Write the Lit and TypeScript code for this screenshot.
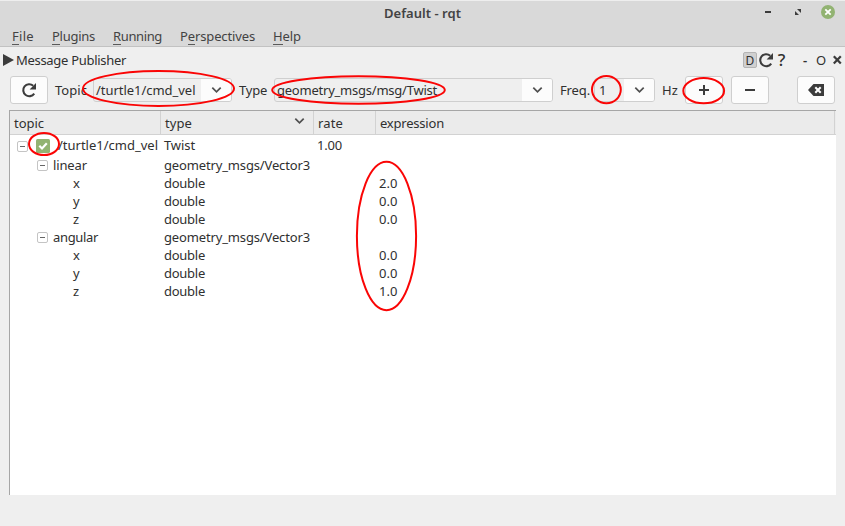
import { LitElement, html, css, svg, nothing } from "lit";
import { customElement, property } from "lit/decorators.js";
import { styleMap } from "lit/directives/style-map.js";

/** A single-line label whose tracking is adjusted so that it spans `w` pixels. */
@customElement("ui-label")
class UiLabel extends LitElement {
  static styles = css`
    :host { display: block; white-space: nowrap; flex: none; }
    .t { display: inline-block; white-space: pre; }
    .k { box-shadow: 0 1px 0 #5a5a5a; display: inline-block; line-height: 16px; }
  `;
  @property() text = "";
  @property({ type: Number }) w = 0;
  @property({ type: Number }) key = -1;

  updated() {
    const t = this.renderRoot.querySelector<HTMLElement>(".t")!;
    t.style.letterSpacing = "0";
    this.style.width = this.w + "px";
    const natural = t.getBoundingClientRect().width;
    t.style.letterSpacing = (this.w - natural) / this.text.length + "px";
  }

  render() {
    const { text, key } = this;
    return key < 0
      ? html`<span class="t">${text}</span>`
      : html`<span class="t">${text.slice(0, key)}<span class="k">${text[key]}</span>${text.slice(key + 1)}</span>`;
  }
}

const label = (text: string, w: number, key = -1) =>
  html`<ui-label .text=${text} .w=${w} .key=${key}></ui-label>`;

const chevron = html`<svg width="12" height="8" viewBox="0 0 12 8" fill="none" stroke="#505050" stroke-width="1.7"><path d="M2.3 1.6 6.5 5.9 10.7 1.6"/></svg>`;

const reload = html`<svg width="16" height="16" viewBox="0 0 16 16"><path d="M13.2 11.6A6 6 0 1 1 12.2 3.7" fill="none" stroke="#3c3c3c" stroke-width="2.1"/><path d="M15 1v6.4H8.6z" fill="#3c3c3c"/></svg>`;

type Row = { depth: number; name: string; nw: number; type: string; tw: number; rate?: string; value?: string };

const V3 = "geometry_msgs/Vector3";
const leaf = (name: string, value: string): Row => ({ depth: 2, name, nw: 7, type: "double", tw: 41, value });
const rows: Row[] = [
  { depth: 0, name: "/turtle1/cmd_vel", nw: 100, type: "Twist", tw: 31, rate: "1.00" },
  { depth: 1, name: "linear", nw: 34, type: V3, tw: 146 },
  leaf("x", "2.0"),
  leaf("y", "0.0"),
  leaf("z", "0.0"),
  { depth: 1, name: "angular", nw: 45, type: V3, tw: 146 },
  leaf("x", "0.0"),
  leaf("y", "0.0"),
  leaf("z", "1.0"),
];

/** Hand-drawn style highlights: centre x, centre y, radius x, radius y. */
const marks = [
  [158.5, 88.5, 75.5, 17.5],
  [358.5, 90, 86.3, 13.8],
  [606.4, 89.6, 14.4, 13.7],
  [703.7, 90.7, 20.4, 12.6],
  [44, 144, 15, 11.1],
  [386.5, 236, 29.6, 74.2],
];

@customElement("app-root")
class AppRoot extends LitElement {
  static styles = css`
    :host {
      display: flex; flex-direction: column; position: relative; overflow: hidden;
      width: 845px; height: 526px; background: #efefef; color: #303030;
      font: 13px/18px "Noto Sans", "Open Sans", sans-serif;
    }
    svg { display: block; flex: none; }
    .chrome { height: 47px; box-sizing: border-box; background: #d9d9d9; border-top: 1px solid #eee; border-bottom: 1px solid #c2c2c2; color: #434343; }
    .title { height: 23px; padding-bottom: 2px; display: grid; grid-template-columns: 384px 1fr auto; align-items: center; }
    .title ui-label { grid-column: 2; font-weight: 600; }
    .winbtns { padding: 0 9px 2px 0; }
    .menu { display: flex; padding: 1px 0 0 12px; gap: 18px; }
    .dock { height: 29px; display: flex; align-items: center; padding: 0 2px 0 3px; box-sizing: border-box; padding-bottom: 3px; }
    .dock ui-label { margin-left: 2px; }
    .dockbtns { margin-left: auto; display: flex; align-items: center; }
    .d { box-sizing: border-box; width: 14px; height: 16px; border: 1px solid #b4b4b4; border-radius: 2px; background: #d0d0d0; font-size: 12px; line-height: 15px; text-align: center; margin-right: 1px; }
    .q { width: 15px; text-align: center; font-size: 17px; font-weight: 500; }
    .dash { width: 12px; margin-left: 10px; text-align: center; font-weight: 600; }
    .o { width: 16px; margin: 0 3px 0 2px; text-align: center; font-size: 13px; }
    .bar { height: 28px; display: flex; align-items: center; padding-left: 10px; }
    .btn { box-sizing: border-box; width: 38px; height: 28px; flex: none; border: 1px solid #cfcfcf; border-radius: 3px; background: #fcfcfc; display: grid; place-items: center; }
    .combo { box-sizing: border-box; height: 24px; flex: none; border: 1px solid #cfcfcf; border-radius: 3px; background: #efefef; display: flex; justify-content: space-between; overflow: hidden; line-height: 22px; }
    .drop { width: 30px; background: #fcfcfc; display: grid; place-items: center; }
    .tree { margin: 6px 9px 31px 9px; flex: 1; background: #fff; border-top: 1px solid #a6a6a6; border-left: 1px solid #a6a6a6; }
    .head { display: grid; grid-template-columns: 151px 153px 62px 459px; height: 24px; box-sizing: border-box; background: #ebebeb; border-bottom: 1px solid #d2d2d2; }
    .cell { border-right: 1px solid #d2d2d2; display: flex; justify-content: space-between; padding: 3px 8px 0 4px; }
    .head svg { margin-top: 3px; }
    .row { display: grid; grid-template-columns: 154px 153px 62px 1fr; height: 18px; align-items: center; }
    .row ui-label { position: relative; top: -1px; }
    .row.top { height: 22px; }
    .row:not(.top) .box { margin-bottom: 2px; }
    .name { display: flex; align-items: center; }
    .box { box-sizing: border-box; width: 11px; height: 11px; border: 1px solid #c4c4c4; border-radius: 2px; display: grid; place-items: center; flex: none; margin-right: 5px; }
    .box::after { content: ""; width: 5px; height: 1px; background: #666; }
    .check { margin: 0 8px 0 3px; }
    .marks { position: absolute; left: 0; top: 0; pointer-events: none; }
  `;

  combo(width: number, text: string, tw: number, pad = 2) {
    return html`<div class="combo" style=${styleMap({ width: width + "px", paddingLeft: pad + "px" })}>${label(text, tw)}<div class="drop">${chevron}</div></div>`;
  }

  row(r: Row) {
    const indent = [7, 27, 63][r.depth];
    return html`<div class="row ${r.depth === 0 ? "top" : ""}">
      <div class="name" style=${styleMap({ paddingLeft: indent + "px" })}>
        ${r.depth < 2 ? html`<i class="box"></i>` : nothing}
        ${r.depth === 0
          ? html`<svg class="check" width="14" height="14" viewBox="0 0 14 14"><rect width="14" height="14" rx="1.5" fill="#92b372"/><path d="M3.3 6.8 6 9.5 10.8 4.3" fill="none" stroke="#fff" stroke-width="2.2"/></svg>`
          : nothing}
        ${label(r.name, r.nw)}
      </div>
      ${label(r.type, r.tw)}
      <div>${r.rate ? label(r.rate, 25) : nothing}</div>
      ${r.value ? label(r.value, 18.5) : nothing}
    </div>`;
  }

  render() {
    return html`
      <div class="chrome">
        <div class="title">
          ${label("Default - rqt", 77)}
          <svg class="winbtns" width="72" height="16" viewBox="0 0 72 16">
            <rect x="1" y="7" width="6" height="2" fill="#3c3c3c"/>
            <path d="M33 5h4v4zM31 7v4h4z" fill="#3c3c3c"/>
            <circle cx="64" cy="8" r="7" fill="#92b372"/>
            <path d="M61.3 5.3l5.4 5.4M66.7 5.3l-5.4 5.4" stroke="#fff" stroke-width="1.8"/>
          </svg>
        </div>
        <div class="menu">
          ${label("File", 22, 0)}${label("Plugins", 43, 0)}${label("Running", 49, 0)}${label("Perspectives", 75, 1)}${label("Help", 28, 0)}
        </div>
      </div>
      <div class="dock">
        <svg width="11" height="12" viewBox="0 0 11 12"><path d="M0 0 11 6 0 12z" fill="#3c3c3c"/></svg>
        ${label("Message Publisher", 110)}
        <div class="dockbtns">
          <div class="d">D</div>${reload}<div class="q">?</div>
          <div class="dash">-</div><div class="o">O</div>
          <svg width="11" height="10" viewBox="0 0 11 10"><path d="M1.8 1.2l7 7.4M8.8 1.2l-7 7.4" stroke="#3c3c3c" stroke-width="2.2"/></svg>
        </div>
      </div>
      <div class="bar">
        <div class="btn">${reload}</div>
        <div style="width:7px"></div>${label("Topic", 32)}<div style="width:6px"></div>
        ${this.combo(139, "/turtle1/cmd_vel", 99.5)}
        <div style="width:7px"></div>${label("Type", 28)}<div style="width:7px"></div>
        ${this.combo(279, "geometry_msgs/msg/Twist", 160)}
        <div style="width:7px"></div>${label("Freq.", 30)}<div style="width:4px"></div>
        ${this.combo(61, "1", 7, 4)}
        <div style="width:7px"></div>${label("Hz", 16)}<div style="width:7px"></div>
        <div class="btn"><svg width="12" height="12" viewBox="0 0 12 12"><path d="M1 6h10M6 1v10" stroke="#3c3c3c" stroke-width="2"/></svg></div>
        <div style="width:8px"></div>
        <div class="btn"><svg width="12" height="12" viewBox="0 0 12 12"><path d="M1 6h10" stroke="#3c3c3c" stroke-width="2"/></svg></div>
        <div style="width:28px"></div>
        <div class="btn"><svg width="16" height="12" viewBox="0 0 16 12"><path d="M5.5 0H16v12H5.5L0 6z" fill="#3c3c3c"/><path d="M7.3 3.2l5.4 5.6M12.7 3.2 7.3 8.8" stroke="#fff" stroke-width="2"/></svg></div>
      </div>
      <div class="tree">
        <div class="head">
          <div class="cell">${label("topic", 30)}</div>
          <div class="cell">${label("type", 27)}${chevron}</div>
          <div class="cell">${label("rate", 25)}</div>
          <div class="cell">${label("expression", 64)}</div>
        </div>
        ${rows.map((r) => this.row(r))}
      </div>
      <svg class="marks" width="845" height="526" fill="none" stroke="#fa0505" stroke-width="2">
        ${marks.map(([x, y, rx, ry]) => svg`<ellipse cx=${x} cy=${y} rx=${rx} ry=${ry}/>`)}
      </svg>
    `;
  }
}
